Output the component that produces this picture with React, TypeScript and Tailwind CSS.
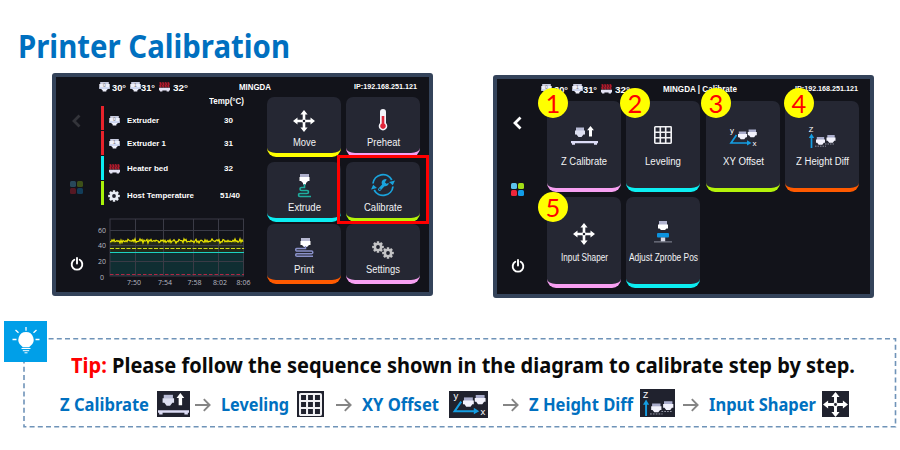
import { useLayoutEffect, useRef, useState, type ReactNode } from "react";

const sans = "font-['Liberation_Sans',Arial,sans-serif]";
const human = "font-['Noto_Sans','Open_Sans',sans-serif]";

/** One line of text, condensed or widened to exactly `w` pixels. */
function Fit({ w, className = "", children }: { w: number; className?: string; children: ReactNode }) {
  const ref = useRef<HTMLSpanElement>(null);
  const [scale, setScale] = useState(1);
  useLayoutEffect(() => {
    const el = ref.current;
    if (el && el.offsetWidth) {
      const prev = el.style.transform;
      el.style.transform = "none";
      setScale(w / el.getBoundingClientRect().width);
      el.style.transform = prev;
    }
  }, [w]);
  return (
    <span className={`block shrink-0 whitespace-nowrap ${className}`} style={{ width: w }}>
      <span ref={ref} className="inline-block origin-left" style={{ transform: `scaleX(${scale})` }}>
        {children}
      </span>
    </span>
  );
}

function Nozzle({ n }: { n?: string }) {
  return (
    <svg viewBox="0 0 11 10" className="h-[10px] w-[11px] shrink-0">
      <path d="M1.200 0h8.600v3H1.200z" fill="#c9cce0" />
      <path d="M.3 2h10.400v4.800H9.200L7.300 8.500v1H3.700v-1L1.800 6.800H.3z" fill="#eef0fb" />
      <path d="M.3 5.300h10.400v1.500H.3z" fill="#c3cdec" />
      <text x="5.500" y="5.200" textAnchor="middle" fontSize="5" fontWeight="400" fill="#777" fontFamily="Liberation Sans">{n}</text>
    </svg>
  );
}

function Bed() {
  return (
    <svg viewBox="0 0 11 10" className="h-[10px] w-[11px] shrink-0" fill="none">
      <path d="M.3.3h10.400v5H.3z" fill="#5a1522" />
      <path d="M1 .3l1 2-1 1.500 1 1.500M3.700.3l1 2-1 1.500 1 1.500M6.400.3l1 2-1 1.500 1 1.500M9 .3l1 2-1 1.500 1 1.500" stroke="#b81c2c" strokeWidth="1.200" />
      <path d="M0 5.800h11v2.600h-1v1H7.600v-1H3.400v1H1v-1H0z" fill="#e3e2f2" />
    </svg>
  );
}

function Gear({ className, color = "#e9edf5" }: { className?: string; color?: string }) {
  return (
    <svg viewBox="-6 -6 12 12" className={className}>
      <g fill={color}>
        {[0, 45, 90, 135].map((a) => (
          <rect key={a} x="-1.250" y="-5.800" width="2.500" height="11.600" rx=".5" transform={`rotate(${a})`} />
        ))}
        <circle r="4.300" />
      </g>
      <circle r="1.900" fill="#20222e" />
    </svg>
  );
}

function Move({ className = "h-[22px] w-[22px]" }: { className?: string }) {
  return (
    <svg viewBox="-11 -11 22 22" className={className}>
      {[0, 90, 180, 270].map((a) => (
        <path key={a} transform={`rotate(${a})`} d="M0-11l3.600 4.500H1.300V-1.500H-1.300V-6.500H-3.600z" fill="#fff" />
      ))}
      <circle r="1.800" fill="#20222e" stroke="#fff" strokeWidth="1" />
    </svg>
  );
}

function Thermometer() {
  return (
    <svg viewBox="0 0 10 22" className="mt-[-2px] h-[22px] w-[10px]">
      <path d="M2 3a3 3 0 0 1 6 0v11a4.300 4.300 0 1 1-6 0z" fill="#f4f4fa" />
      <path d="M3.700 7h2.600v7.600a2.800 2.800 0 1 1-2.600 0z" fill="#e1263a" />
    </svg>
  );
}

function Extrude() {
  return (
    <svg viewBox="0 0 16 24" className="h-[24px] w-[16px]" fill="none">
      <path d="M4 0h9v3.500H4z" fill="#aeb0cb" />
      <path d="M3.500 3h10v4H12l-2 2v1.500H7V9L5 7H3.500z" fill="#fff" />
      <path d="M8.500 10v3.500H5.500a1.500 1.500 0 0 0 0 3H11a1.500 1.500 0 0 1 0 3H4a1.500 1.500 0 0 0 0 3h11" stroke="#1fae9f" strokeWidth="1.600" />
    </svg>
  );
}

function Calibrate() {
  return (
    <svg viewBox="-12 -12 24 24" className="mt-[-3px] h-[24px] w-[24px]" fill="none" stroke="#1aa3dc">
      <path d="M-10-1.500A10 10 0 0 1 8.800-5" strokeWidth="1.800" />
      <path d="M10 1.500A10 10 0 0 1-8.800 5" strokeWidth="1.800" />
      <path d="M12-4.500L9.800.2 6-3z M-12 4.500L-9.800-.2-6 3z" fill="#1aa3dc" stroke="none" />
      <path d="M-3.500 4.500L1.500-1" strokeWidth="3" strokeLinecap="round" />
      <path d="M3.800-5.500A3.600 3.600 0 1 0 5.800-2L3.200-1.300 1.900-2.800z" fill="#1aa3dc" stroke="none" />
      <circle cx="-3.200" cy="4.200" r=".8" fill="#252733" stroke="none" />
    </svg>
  );
}

function Print() {
  return (
    <svg viewBox="0 0 19 20" className="h-[20px] w-[19px]" fill="none">
      <path d="M6 0h9v3.500H6z" fill="#b7b9d2" />
      <path d="M5.500 3h10v4H14l-2 2H9L7 7H5.500z" fill="#fff" />
      <path d="M10.500 8v2.500H2a1.200 1.200 0 0 0 0 2.600h14.500a1.200 1.200 0 0 1 0 2.600H2a1.200 1.200 0 0 0 0 2.600h16" stroke="#8990c8" strokeWidth="1.500" />
    </svg>
  );
}

function Settings() {
  return (
    <span className="mt-[3px] flex">
      <Gear className="h-[12px] w-[12px]" color="#c4c4c6" />
      <Gear className="-ml-[2px] mt-[6px] h-[12px] w-[12px]" color="#c4c4c6" />
    </span>
  );
}

function ZCalibrate({ className = "-mt-[2px] h-[19px] w-[27px]" }: { className?: string }) {
  return (
    <svg viewBox="0 0 27 19" className={className}>
      <path d="M5 1.500h8v3.500H5z" fill="#b9bcd6" />
      <path d="M4 4.500h10v4h-1.500L10.500 11h-3L5.500 8.500H4z" fill="#dddff0" />
      <path d="M19.500 0l3.400 4.200H21v6.300h-3V4.200h-1.900z" fill="#fff" />
      <path d="M0 15h27v2.200h-1v1.500h-3v-1.500H4v1.500H1v-1.500H0z" fill="#dcdcf5" />
    </svg>
  );
}

function Grid({ className = "-mt-[2px] h-[18px] w-[18px]" }: { className?: string }) {
  return (
    <svg viewBox="0 0 18 18" className={className} fill="none" stroke="#f1f1f4" strokeWidth="1.600">
      <rect x=".8" y=".8" width="16.400" height="16.400" rx=".6" />
      <path d="M6.300 1v16M11.700 1v16M1 6.300h16M1 11.700h16" />
    </svg>
  );
}

function MiniHead({ x, y }: { x: number; y: number }) {
  return (
    <g transform={`translate(${x} ${y})`}>
      <path d="M.8 0h7.400v3H.8z" fill="#a9accb" />
      <path d="M0 2.500h9v3.200H7.800L6.300 7.800H2.700L1.200 5.700H0z" fill="#f2f2fc" />
    </g>
  );
}

function XYOffset({ className = "mt-[2px] h-[20px] w-[28px]" }: { className?: string }) {
  return (
    <svg viewBox="0 0 28 20" className={`overflow-visible ${className}`} fill="none" fontWeight="400">
      <text x="1" y="5.500" fontSize="8" fill="#fff" fontFamily="Liberation Sans">y</text>
      <text x="23.500" y="19" fontSize="8" fill="#fff" fontFamily="Liberation Sans">x</text>
      <path d="M7.500 8L2 16h17" stroke="#159ee2" strokeWidth="1.700" />
      <path d="M18 13.200l4.500 2.800-4.500 2.600z" fill="#159ee2" />
      <MiniHead x={9} y={4.500} />
      <MiniHead x={18.800} y={2.500} />
    </svg>
  );
}

function ZHeight({ className = "mt-[1px] h-[22px] w-[28px]" }: { className?: string }) {
  return (
    <svg viewBox="0 0 28 22" className={className} fill="none" fontWeight="400">
      <text x=".8" y="6" fontSize="7.500" fill="#fff" fontFamily="Liberation Sans">Z</text>
      <path d="M3.500 10v12" stroke="#159ee2" strokeWidth="1.700" />
      <path d="M.8 12l2.700-4.500L6.200 12z" fill="#159ee2" />
      <MiniHead x={8} y={11} />
      <MiniHead x={18.500} y={9} />
      <path d="M7 20.200h11M17 18h10" stroke="#b9bccb" strokeWidth=".7" strokeDasharray="1.500 1" />
    </svg>
  );
}

function Probe() {
  return (
    <svg viewBox="0 0 18 22" className="h-[22px] w-[18px]">
      <path d="M5 0h8v4H5z" fill="#b2b4cf" />
      <path d="M4 3.500h10v4h-1.500L11 9H7L5.500 7.500H4z" fill="#fff" />
      <rect x="3" y="12" width="12" height="4.500" rx="1" fill="#0c93df" />
      <path d="M6.800 16.500h4.400v4H6.800z" fill="#d8d9e5" />
      <path d="M0 20.400h18v1H0z" fill="#8d909e" />
    </svg>
  );
}

function Tile({ label, w, accent, tall, children }: { label: string; w: number; accent: string; tall?: boolean; children: ReactNode }) {
  return (
    <div className={`flex w-[74px] flex-col items-center rounded-t-[7px] rounded-b-[9px] border-b-[4px] bg-[#252733] ${tall ? "h-[91px] pt-[16px]" : "h-[60px] pt-[9px]"} ${accent}`}>
      <div className={`flex shrink-0 items-center justify-center ${tall ? "h-[38px]" : "h-[30px]"}`}>{children}</div>
      <Fit w={w} className="text-[10px] leading-[14px] text-[#f3f3f5]">{label}</Fit>
    </div>
  );
}

function Sidebar({ dim }: { dim?: boolean }) {
  return (
    <div className={`flex shrink-0 flex-col items-center ${dim ? "w-[45px] pr-[4px] pt-[17px]" : "w-[50px] pr-[9px] pt-[16px]"}`}>
      <svg viewBox="0 0 9 14" className={`h-[14px] w-[9px] ${dim ? "text-[#33343a]" : "text-white"}`} fill="none" stroke="currentColor" strokeWidth="2.800">
        <path d="M7.500 1.500L2 7l5.500 5.500" />
      </svg>
      <div className={`mt-[53px] grid grid-cols-2 gap-[1px] ${dim ? "opacity-30" : ""}`}>
        <i className="h-[6px] w-[6px] rounded-[1.500px] bg-[#5cc3ee]" />
        <i className="h-[6px] w-[6px] rounded-[1.500px] bg-[#a2dd16]" />
        <i className="h-[6px] w-[6px] rounded-[1.500px] bg-[#ee263a]" />
        <i className="h-[6px] w-[6px] rounded-[1.500px] bg-[#129de9]" />
      </div>
      <svg viewBox="0 0 14 14" className="mt-[63px] h-[14px] w-[14px]" fill="none" stroke="#fff" strokeWidth="1.900" strokeLinecap="round">
        <path d="M4.300 2.800a5.300 5.300 0 1 0 5.400 0M7 1v5.500" />
      </svg>
    </div>
  );
}

function StatusBar({ title, titleW, right }: { title: string; titleW: number; right?: boolean }) {
  return (
    <div className={`flex h-[20px] items-center font-bold text-white ${right ? "pl-[44px]" : "pl-[43px]"}`}>
      <Nozzle n="0" />
      <Fit w={14} className="ml-[2px] pt-[3px] text-[9.500px]">30°</Fit>
      <span className="ml-[4px] flex"><Nozzle n="1" /></span>
      <Fit w={14} className="pt-[3px] text-[9.500px]">31°</Fit>
      <span className="ml-[4px] flex"><Bed /></span>
      <Fit w={15} className="ml-[3px] pt-[3px] text-[9.500px]">32°</Fit>
      <Fit w={titleW} className={`text-[8.500px] ${right ? "ml-[33px]" : "ml-[51px]"}`}>{title}</Fit>
      <Fit w={63} className={`text-[7.500px] ${right ? "ml-[58px]" : "ml-[83px]"}`}>IP:192.168.251.121</Fit>
    </div>
  );
}

function Sensor({ name, w, value, vw, bar, low, icon }: { name: string; w: number; value: string; vw: number; bar: string; low?: boolean; icon: ReactNode }) {
  return (
    <div className="flex h-[25px]">
      <div className={`h-[24px] w-[3px] ${bar}`} />
      <div className={`flex flex-1 items-center ${low ? "pt-[4px]" : ""}`}>
        <span className="ml-[5px] flex w-[11px] justify-center">{icon}</span>
        <Fit w={w} className="ml-[7px] text-[8px]">{name}</Fit>
      </div>
      <div className={`flex w-[78px] items-center justify-center ${low ? "pt-[4px]" : ""}`}>
        <Fit w={vw} className="text-[8px]">{value}</Fit>
      </div>
    </div>
  );
}

const noise = Array.from({ length: 134 }, (_, i) => {
  const y = 241 + Math.sin(i * 2.7) * 0.9 + Math.sin(i * 1.13 + 2) * 0.7 + Math.sin(i * i * 0.71) * 0.8;
  return `${110 + i},${y.toFixed(2)}`;
}).join(" ");

function Chart() {
  return (
    <svg viewBox="95 212 160 78" className="-ml-[6px] mt-[6px] h-[78px] w-[160px]" fontWeight="400">
      <rect x="110" y="241" width="134" height="11" fill="#242a1a" />
      <rect x="110" y="252" width="134" height="24" fill="#102e32" />
      <g stroke="#3a3b46" strokeWidth="1" fill="none">
        <path d="M135.500 219v57M163.500 219v57M193.500 219v57M218.500 219v57M110 230.500h134M110 245.500h134M110 261.500h134" />
        <rect x="110" y="219" width="133.500" height="57" />
      </g>
      <polyline points={noise} fill="none" stroke="#e9e500" strokeWidth="1.200" />
      <path d="M110 248.500h134" stroke="#cfdc18" strokeDasharray="4 1.500" />
      <path d="M110 252.500h134" stroke="#1cd3c1" />
      <path d="M110 274.500h134" stroke="#b02744" strokeDasharray="3.500 2" />
      <g fontSize="7" fill="#b9bac2" fontFamily="Open Sans, sans-serif" textAnchor="end">
        <text x="106" y="232.500">60</text>
        <text x="106" y="247.700">40</text>
        <text x="106" y="264.200">20</text>
        <text x="104" y="279.500">0</text>
      </g>
      <g fontSize="7" fill="#b9bac2" fontFamily="Open Sans, sans-serif" textAnchor="middle">
        <text x="134" y="285">7:50</text>
        <text x="165" y="285">7:54</text>
        <text x="194.500" y="285">7:58</text>
        <text x="220" y="285">8:02</text>
        <text x="243.500" y="285">8:06</text>
      </g>
    </svg>
  );
}

function Badge({ n, at }: { n: number; at: string }) {
  return (
    <div className={`absolute flex h-[30px] w-[30px] items-center justify-center rounded-full bg-[#ffff00] font-['Lato',sans-serif] text-[25.500px] leading-[30px] text-[#f00] ${at}`}>
      {n}
    </div>
  );
}

const device = `relative h-[223px] w-[381px] rounded-[3px] border-[4px] border-[#34435a] bg-[#12131a] text-white ${sans}`;

function HomeScreen() {
  return (
    <section className={device}>
      <StatusBar title="MINGDA" titleW={32} />
      <div className="flex">
        <Sidebar dim />
        <div className="w-[166px] font-bold">
          <div className="h-[9px] pl-[108px]">
            <Fit w={35} className="text-[8.500px] leading-[9px]">Temp(°C)</Fit>
          </div>
          <Sensor low name="Extruder" w={32} value="30" vw={9} bar="bg-[#e8232b]" icon={<Nozzle n="0" />} />
          <Sensor name="Extruder 1" w={39} value="31" vw={9} bar="bg-[#e8232b]" icon={<Nozzle n="1" />} />
          <Sensor name="Heater bed" w={41} value="32" vw={9} bar="bg-[#0ceef2]" icon={<Bed />} />
          <Sensor low name="Host Temperature" w={67} value="51/40" vw={20} bar="bg-[#a9f20a]" icon={<Gear className="h-[12px] w-[12px] shrink-0" />} />
          <Chart />
        </div>
        <div className="grid grid-cols-[79px_74px] grid-rows-[65px_62px_60px]">
          <Tile label="Move" w={23} accent="border-[#ffff00]"><Move /></Tile>
          <Tile label="Preheat" w={33} accent="border-[#f7a0f2]"><Thermometer /></Tile>
          <Tile label="Extrude" w={33} accent="border-[#0ceef2]"><Extrude /></Tile>
          <Tile label="Calibrate" w={38} accent="border-[#b3f20a]"><Calibrate /></Tile>
          <Tile label="Print" w={20} accent="border-[#ff5a00]"><Print /></Tile>
          <Tile label="Settings" w={34} accent="border-[#f7a0f2]"><Settings /></Tile>
        </div>
      </div>
      <div className="absolute left-[281px] top-[78px] h-[69px] w-[92px] border-[3px] border-[#f00]" />
    </section>
  );
}

function CalibrateScreen() {
  return (
    <section className={`mt-[2px] ${device}`}>
      <StatusBar right title="MINGDA | Calibrate" titleW={74} />
      <div className="flex pt-[1px]">
        <Sidebar />
        <div className="grid grid-cols-[79px_80px_79px_74px] grid-rows-[96px_92px] pt-[1px]">
          <Tile tall label="Z Calibrate" w={46} accent="border-[#f7a0f2]"><ZCalibrate /></Tile>
          <Tile tall label="Leveling" w={36} accent="border-[#0ceef2]"><Grid /></Tile>
          <Tile tall label="XY Offset" w={41} accent="border-[#b3f20a]"><XYOffset /></Tile>
          <Tile tall label="Z Height Diff" w={53} accent="border-[#ff5a00]"><ZHeight /></Tile>
          <Tile tall label="Input Shaper" w={47} accent="border-[#f7a0f2]"><Move className="mt-1 h-[22px] w-[22px]" /></Tile>
          <Tile tall label="Adjust Zprobe Pos" w={69} accent="border-[#0ceef2]"><Probe /></Tile>
        </div>
      </div>
      <Badge n={1} at="left-[41px] top-[9px]" />
      <Badge n={2} at="left-[123px] top-[9px]" />
      <Badge n={3} at="left-[204px] top-[9px]" />
      <Badge n={4} at="left-[287px] top-[9px]" />
      <Badge n={5} at="left-[41px] top-[113px]" />
    </section>
  );
}

function Arrow({ className }: { className: string }) {
  return (
    <svg viewBox="0 0 16 14" className={`mt-[2px] h-[14px] w-[16px] shrink-0 ${className}`} fill="none" stroke="#858585" strokeWidth="1.900">
      <path d="M0 7h14.500M8.800 1.200L14.600 7l-5.800 5.800" />
    </svg>
  );
}

function Chip({ className, children }: { className: string; children: ReactNode }) {
  return <span className={`flex shrink-0 items-center justify-center bg-[#20222e] ${className}`}>{children}</span>;
}

function Bulb() {
  return (
    <div className="absolute -left-[19px] -top-[17px] flex h-[41px] w-[43px] justify-center bg-[#009fe8] pt-[6px]">
      <svg viewBox="0 0 28 27" className="h-[27px] w-[28px]" fill="none" stroke="#fff" strokeWidth="1.300">
        <path d="M14 0v3.800M3.500 3l3 2.700M24.500 3l-3 2.700M.5 12.500h4M23.500 12.500h4" />
        <path d="M14 5a7.700 7.700 0 0 1 4.600 13.800c-.8.600-1 1-1.200 1.400h-6.800c-.2-.4-.4-.8-1.200-1.400A7.700 7.700 0 0 1 14 5z" fill="#fff" stroke="none" />
        <path d="M9.500 21.500h9M10.800 23.700h6.400M12.500 25.800h3" strokeWidth="1" />
      </svg>
    </div>
  );
}

/** Dashed outline around the tip. */
function Outline() {
  return (
    <svg className="absolute inset-0 h-full w-full" fill="none" stroke="#6f93b8" strokeWidth="1.600">
      <rect x="1" y=".8" width="871.500" height="88" strokeDasharray="5 3.200" />
    </svg>
  );
}

export default function App() {
  return (
    <main className={`h-[450px] w-[900px] overflow-hidden bg-white font-bold ${human}`}>
      <h1 className="h-[73px] pl-[18px] pt-[26px] text-[32px] leading-[40px] text-[#0070c0]">
        <Fit w={272}>Printer Calibration</Fit>
      </h1>
      <div className="flex gap-[60px] pl-[52px] font-normal">
        <HomeScreen />
        <CalibrateScreen />
      </div>
      <div className="relative ml-[23px] mt-[40px] h-[90px] w-[874px]">
        <Outline />
        <Bulb />
        <p className="pl-[48px] pt-[13px] text-[21px] leading-[28px] text-[#0a0a0a]">
          <Fit w={784}><span className="text-[#f00]">Tip:</span> Please follow the sequence shown in the diagram to calibrate step by step.</Fit>
        </p>
        <div className="mt-[10px] flex h-[30px] items-center pl-[37px] text-[17px] leading-[26px] text-[#0070c0]">
          <Fit w={89} className="pt-[2px]">Z Calibrate</Fit>
          <Chip className="ml-[8px] h-[26px] w-[33px]"><ZCalibrate className="h-[22px] w-[31px]" /></Chip>
          <Arrow className="ml-[5px]" />
          <Fit w={68} className="ml-[10px] pt-[2px]">Leveling</Fit>
          <Chip className="ml-[8px] h-[26px] w-[27px]"><Grid className="h-[23px] w-[23px]" /></Chip>
          <Arrow className="ml-[12px]" />
          <Fit w={77} className="ml-[10px] pt-[2px]">XY Offset</Fit>
          <Chip className="ml-[10px] h-[27px] w-[39px]"><XYOffset className="h-[24px] w-[34px]" /></Chip>
          <Arrow className="ml-[15px]" />
          <Fit w={104} className="ml-[10px] pt-[2px]">Z Height Diff</Fit>
          <Chip className="mb-[2px] ml-[7px] h-[28px] w-[35px]"><ZHeight className="h-[25px] w-[32px]" /></Chip>
          <Arrow className="ml-[8px]" />
          <Fit w={107} className="ml-[10px] pt-[2px]">Input Shaper</Fit>
          <Chip className="ml-[6px] h-[26px] w-[27px]"><Move className="h-[25px] w-[25px]" /></Chip>
        </div>
      </div>
    </main>
  );
}
